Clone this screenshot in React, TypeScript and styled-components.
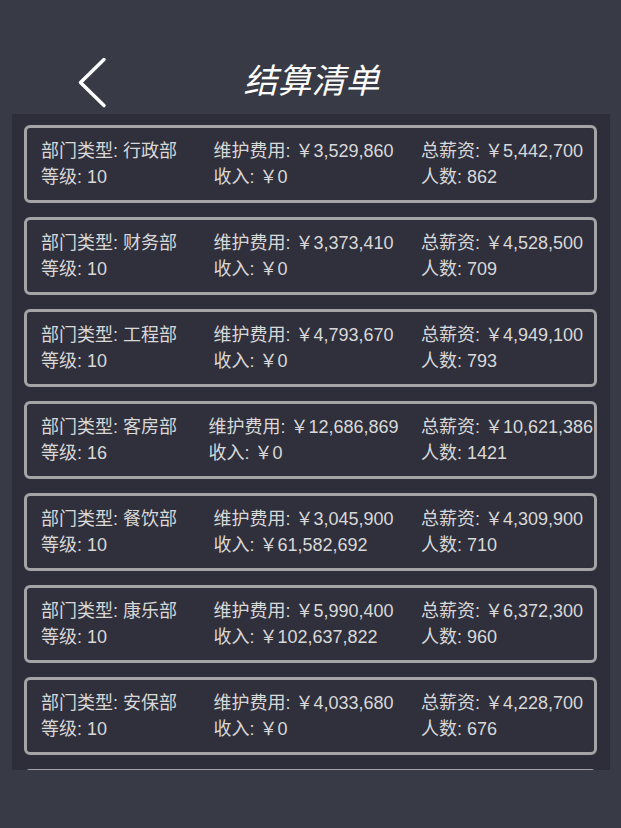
import React from "react";
import styled, { createGlobalStyle } from "styled-components";

const Global = createGlobalStyle`
  html, body { margin: 0; padding: 0; background: #383b46; }
  body { font-family: "Liberation Sans", "Noto Sans CJK SC", sans-serif; }
`;

const Page = styled.div`
  width: 621px;
  height: 828px;
  background: #383b46;
  overflow: hidden;
`;

const Header = styled.header`
  height: 70px;
  padding-top: 44px;
  display: grid;
  grid-template-columns: 1fr auto 1fr;
  align-items: center;
`;

const BackButton = styled.button`
  justify-self: start;
  margin-left: 77px;
  margin-top: 6px;
  padding: 0;
  border: none;
  background: none;
  display: flex;
  cursor: pointer;
`;

const Title = styled.h1`
  margin: 0 0 0 2px;
  font-family: "Noto Sans CJK SC", sans-serif;
  font-size: 34px;
  font-weight: 400;
  font-style: italic;
  color: #ffffff;
  letter-spacing: 0;
  line-height: 1;
`;

const Panel = styled.main`
  margin: 0 11px 0 12px;
  height: 645px;
  padding: 11px 13px 0 12px;
  background: #2e2e3a;
  overflow: hidden;
  display: flex;
  flex-direction: column;
  gap: 14px;
`;

const Card = styled.section`
  flex: none;
  height: 72px;
  border: 3px solid #a4a4a6;
  border-radius: 6px;
  background: #30303c;
  padding: 0 0 0 14px;
  display: grid;
  grid-template-columns: 145px 235px 1fr;
  align-items: center;
  color: #d8d8d8;
  font-size: 18px;
  line-height: 26px;
`;

const Col = styled.div<{ $center?: boolean }>`
  min-width: 0;
  white-space: nowrap;
  text-align: ${(p) => (p.$center ? "center" : "left")};
`;

const Block = styled.div`
  display: inline-block;
  text-align: left;
`;

const Line = styled.div``;

type Dept = {
  name: string;
  level: number;
  cost: string;
  income: string;
  salary: string;
  people: number;
};

const depts: Dept[] = [
  { name: "行政部", level: 10, cost: "3,529,860", income: "0", salary: "5,442,700", people: 862 },
  { name: "财务部", level: 10, cost: "3,373,410", income: "0", salary: "4,528,500", people: 709 },
  { name: "工程部", level: 10, cost: "4,793,670", income: "0", salary: "4,949,100", people: 793 },
  { name: "客房部", level: 16, cost: "12,686,869", income: "0", salary: "10,621,386", people: 1421 },
  { name: "餐饮部", level: 10, cost: "3,045,900", income: "61,582,692", salary: "4,309,900", people: 710 },
  { name: "康乐部", level: 10, cost: "5,990,400", income: "102,637,822", salary: "6,372,300", people: 960 },
  { name: "安保部", level: 10, cost: "4,033,680", income: "0", salary: "4,228,700", people: 676 },
];

const Chevron = () => (
  <svg width="31" height="53" viewBox="0 0 31 53" fill="none">
    <path
      d="M27 3.5 L3.5 26.5 L27 49.5"
      stroke="#ffffff"
      strokeWidth="3.5"
      strokeLinecap="round"
      strokeLinejoin="round"
    />
  </svg>
);

export default function App() {
  return (
    <Page>
      <Global />
      <Header>
        <BackButton aria-label="返回">
          <Chevron />
        </BackButton>
        <Title>结算清单</Title>
        <span />
      </Header>
      <Panel>
        {depts.map((d) => (
          <Card key={d.name}>
            <Col>
              <Line>部门类型: {d.name}</Line>
              <Line>等级: {d.level}</Line>
            </Col>
            <Col $center>
              <Block>
                <Line>维护费用: ￥{d.cost}</Line>
                <Line>收入: ￥{d.income}</Line>
              </Block>
            </Col>
            <Col>
              <Line>总薪资: ￥{d.salary}</Line>
              <Line>人数: {d.people}</Line>
            </Col>
          </Card>
        ))}
        <Card aria-hidden="true" />
      </Panel>
    </Page>
  );
}
